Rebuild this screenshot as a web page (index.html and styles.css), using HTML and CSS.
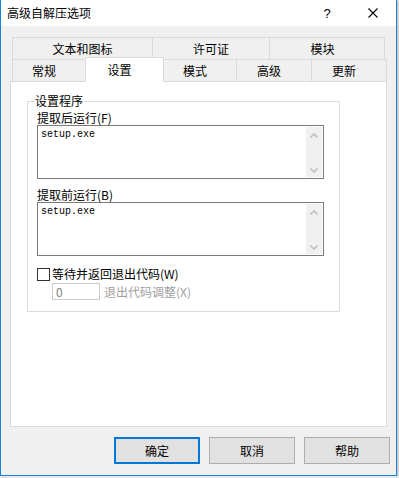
FILE: index.html
```html
<!DOCTYPE html>
<html lang="zh-CN">
<head>
  <meta charset="UTF-8" />
  <title>高级自解压选项</title>
  <link rel="stylesheet" href="styles.css">
</head>
<body>
  <div class="window">
    <div class="titlebar">
      <span class="title">高级自解压选项</span>
      <span class="caption-btn help">?</span>
      <span class="caption-btn">
        <svg width="10" height="10" viewBox="0 0 10 10"><path d="M0.5 0.5 L9.5 9.5 M9.5 0.5 L0.5 9.5" stroke="#000" stroke-width="1.1" fill="none"/></svg>
      </span>
    </div>

    <div class="client">
      <div class="tabs">
        <div class="tab-row back">
          <div class="tab tab-text">文本和图标</div>
          <div class="tab tab-license">许可证</div>
          <div class="tab tab-module">模块</div>
        </div>
        <div class="tab-row front">
          <div class="tab tab-general">常规</div>
          <div class="tab tab-setup active">设置</div>
          <div class="tab tab-mode">模式</div>
          <div class="tab tab-adv">高级</div>
          <div class="tab tab-update">更新</div>
        </div>
      </div>

      <div class="panel">
        <fieldset class="group">
          <legend>设置程序</legend>
          <div class="group-body">
            <div class="field-label">提取后运行(F)</div>
            <div class="edit">
              <span class="edit-text">setup.exe</span>
              <div class="vscroll">
                <svg width="8" height="5" viewBox="0 0 8 5"><path d="M0.5 4.5 L4 1 L7.5 4.5" stroke="#bfbfbf" stroke-width="1.6" fill="none"/></svg>
                <svg width="8" height="5" viewBox="0 0 8 5"><path d="M0.5 0.5 L4 4 L7.5 0.5" stroke="#bfbfbf" stroke-width="1.6" fill="none"/></svg>
              </div>
            </div>

            <div class="field-label second">提取前运行(B)</div>
            <div class="edit">
              <span class="edit-text">setup.exe</span>
              <div class="vscroll">
                <svg width="8" height="5" viewBox="0 0 8 5"><path d="M0.5 4.5 L4 1 L7.5 4.5" stroke="#bfbfbf" stroke-width="1.6" fill="none"/></svg>
                <svg width="8" height="5" viewBox="0 0 8 5"><path d="M0.5 0.5 L4 4 L7.5 0.5" stroke="#bfbfbf" stroke-width="1.6" fill="none"/></svg>
              </div>
            </div>

            <div class="check-row">
              <span class="check"></span>
              <span class="check-label">等待并返回退出代码(W)</span>
            </div>
            <div class="num-row">
              <span class="num">0</span>
              <span class="num-label">退出代码调整(X)</span>
            </div>
          </div>
        </fieldset>
      </div>

      <div class="buttons">
        <div class="btn default">确定</div>
        <div class="btn">取消</div>
        <div class="btn">帮助</div>
      </div>
    </div>
  </div>
</body>
</html>
```

FILE: styles.css
```css
body {
  margin: 0;
  background: #e6e6e6;
  font-family: "Noto Sans CJK SC", "Noto Sans", sans-serif;
  font-size: 12px;
  color: #000;
}
.window {
  width: 395px;
  height: 475px;
  border: 1px solid #1883d7;
  border-top: 0;
  background: #f0f0f0;
  display: flex;
  flex-direction: column;
  box-shadow: 1px 1px 2px rgba(0,0,0,0.2);
}
.titlebar {
  height: 26px;
  background: #fff;
  display: flex;
  align-items: center;
  flex-shrink: 0;
}
.title {
  flex: 1;
  padding-left: 6px;
  line-height: 14px;
}
.caption-btn {
  width: 46px;
  height: 26px;
  display: flex;
  align-items: center;
  justify-content: center;
}
.help {
  font-family: "Liberation Sans", sans-serif;
  font-size: 13px;
}
.client {
  flex: 1;
  padding: 11px 9px 0 9px;
}

/* tabs */
.tab-row {
  display: flex;
  height: 23px;
  margin-left: 2px;
}
.tab-row.front {
  margin-top: -1px;
  align-items: flex-end;
}
.tab {
  box-sizing: border-box;
  height: 23px;
  border: 1px solid #d9d9d9;
  margin-left: -1px;
  display: flex;
  align-items: center;
  justify-content: center;
  line-height: 14px;
  white-space: nowrap;
}
.tab:first-child {
  margin-left: 0;
}
.front .tab {
  padding-right: 10px;
}
.tab-text { width: 141px; }
.tab-license { width: 118px; }
.tab-module { width: 116px; padding-right: 9px; }
.tab-general { width: 74px; }
.tab-setup { width: 79px; }
.tab-mode { width: 74px; }
.tab-adv { width: 76px; }
.tab-update { width: 76px; }
.tab.active {
  height: 25px;
  background: #fff;
  border-bottom-color: #fff;
  position: relative;
  z-index: 1;
}

/* panel */
.panel {
  box-sizing: border-box;
  height: 346px;
  margin-top: -1px;
  background: #fff;
  border: 1px solid #d9d9d9;
  padding: 12px 0 0 16px;
}
.group {
  width: 311px;
  margin: 0;
  padding: 0;
  border: 1px solid #dcdcdc;
  min-inline-size: 0;
}
.group legend {
  margin-left: 6px;
  padding: 0 1px;
  line-height: 14px;
}
.group-body {
  padding: 3px 9px 11px 9px;
}
.field-label {
  line-height: 14px;
  height: 14px;
}
.field-label.second {
  margin-top: 9px;
}
.edit {
  box-sizing: border-box;
  width: 287px;
  height: 54px;
  border: 1px solid #7a7a7a;
  display: flex;
  justify-content: space-between;
  padding: 1px 1px 1px 3px;
}
.edit-text {
  font-family: "Liberation Mono", monospace;
  font-size: 10px;
  line-height: 12px;
  padding-top: 2px;
}
.vscroll {
  width: 16px;
  background: #f0f0f0;
  display: flex;
  flex-direction: column;
  align-items: center;
  justify-content: space-between;
  padding: 6px 0 4px 0;
  box-sizing: border-box;
}
.check-row {
  margin-top: 11px;
  height: 14px;
  display: flex;
  align-items: center;
}
.check {
  box-sizing: border-box;
  width: 13px;
  height: 13px;
  border: 1px solid #333;
  background: #fff;
}
.check-label {
  margin-left: 2px;
  line-height: 14px;
}
.num-row {
  margin-top: 2px;
  margin-left: 15px;
  display: flex;
  align-items: center;
}
.num {
  box-sizing: border-box;
  width: 48px;
  height: 17px;
  border: 1px solid #cccccc;
  padding-left: 3px;
  line-height: 15px;
  color: #838383;
}
.num-label {
  margin-left: 4px;
  color: #a0a0a0;
  line-height: 14px;
}

/* buttons */
.buttons {
  display: flex;
  justify-content: flex-end;
  gap: 9px;
  margin-top: 10px;
  margin-right: -3px;
}
.btn {
  box-sizing: border-box;
  width: 86px;
  height: 27px;
  background: #e1e1e1;
  border: 1px solid #adadad;
  display: flex;
  align-items: center;
  justify-content: center;
  line-height: 14px;
}
.btn.default {
  border: 2px solid #0078d7;
}
```
